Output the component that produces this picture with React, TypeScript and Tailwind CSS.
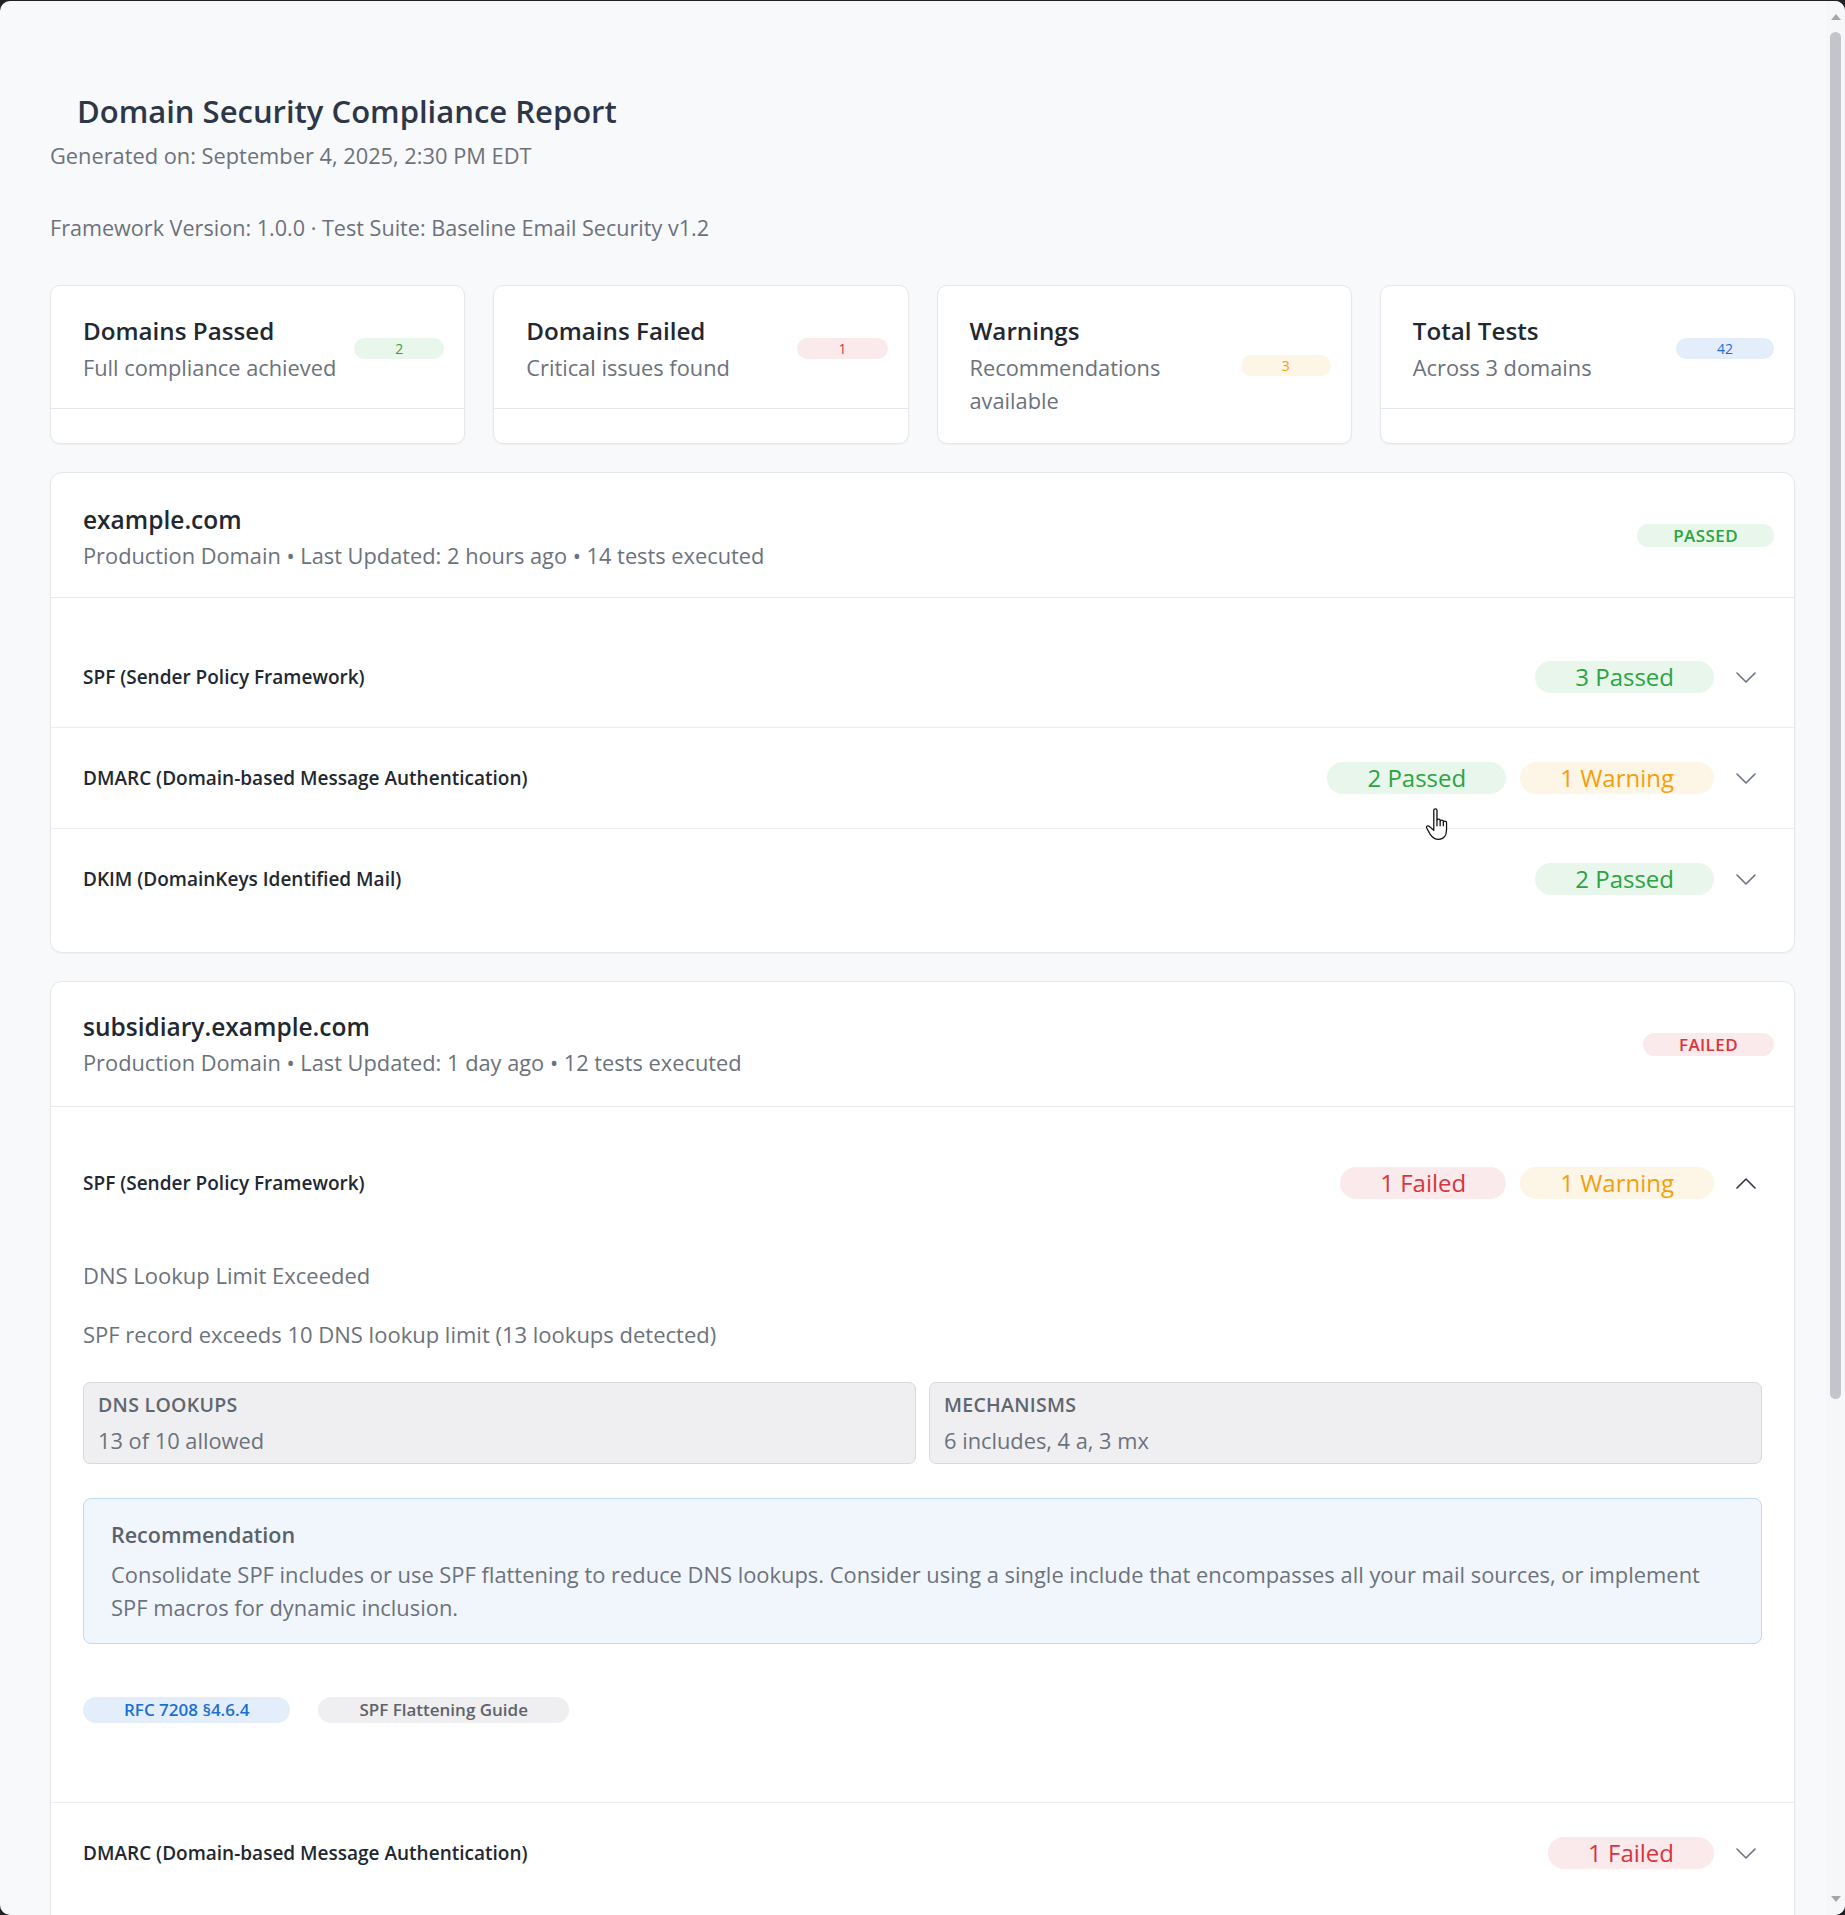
import React from 'react';

type Tone = 'green' | 'red' | 'amber' | 'blue' | 'gray';

const tones: Record<Tone, string> = {
  green: 'bg-[#e8f6eb] text-[#2ba441]',
  red: 'bg-[#fbeaeb] text-[#d8343f]',
  amber: 'bg-[#fdf5e6] text-[#f59e0b]',
  blue: 'bg-[#e3eefa] text-[#1c6fd2]',
  gray: 'bg-[#efeff1] text-[#5f6368]',
};

function Chevron({ up = false }: { up?: boolean }) {
  return (
    <svg width="20" height="11" viewBox="0 0 20 11" fill="none" stroke={up ? '#2d3748' : '#6b7280'} strokeWidth="1.6" strokeLinecap="round" strokeLinejoin="round">
      <path d={up ? 'M1 10 10 1l9 9' : 'M1 1l9 9 9-9'} />
    </svg>
  );
}

function StatCard({ title, sub, value, tone, footer = true }: { title: string; sub: string; value: string; tone: Tone; footer?: boolean }) {
  return (
    <div className="h-[159px] overflow-hidden rounded-[10px] border border-[#e5e7eb] bg-white shadow-[0_1px_2px_rgba(0,0,0,0.04)]">
      <div className="flex items-center gap-4 pl-[32px] pr-[20px] pt-[27px] pb-[24px]">
        <div className="flex-1">
          <div className="text-[24.2px] font-semibold leading-[36px] text-[#222831]">{title}</div>
          <div className="mt-[2px] text-[21.8px] leading-[33px] text-[#6c727c]">{sub}</div>
        </div>
        <span className={`rounded-full px-[41px] text-[14px] leading-[21px] ${tones[tone]}`}>{value}</span>
      </div>
      {footer && <div className="h-[34px] border-t border-[#e5e7eb]" />}
    </div>
  );
}

function Pill({ tone, children }: { tone: Tone; children: React.ReactNode }) {
  return <span className={`rounded-full px-[40px] text-[24px] font-medium leading-[32px] ${tones[tone]}`}>{children}</span>;
}

function CheckRow({ label, pills, open = false, children }: { label: string; pills: React.ReactNode; open?: boolean; children?: React.ReactNode }) {
  return (
    <div className="border-b border-[#eceef1] last:border-b-0">
      <div className="flex h-[100px] items-center pl-[32px] pr-[38px]">
        <div className="flex-1 text-[19px] font-semibold text-[#222831]">{label}</div>
        <div className="flex items-center gap-[14px]">{pills}</div>
        <div className="ml-[22px] flex">
          <Chevron up={open} />
        </div>
      </div>
      {open && children}
    </div>
  );
}

function DomainCard({ name, meta, status, tone, first = false, children }: { name: string; meta: string; status: string; tone: Tone; first?: boolean; children: React.ReactNode }) {
  return (
    <div className="overflow-hidden rounded-[12px] border border-[#e5e7eb] bg-white shadow-[0_1px_2px_rgba(0,0,0,0.04)]">
      <div className="flex h-[125px] items-center justify-between border-b border-[#e5e7eb] pl-[32px] pr-[20px]">
        <div className={first ? 'mt-[5px]' : 'mt-[1px]'}>
          <div className="text-[24.5px] font-semibold leading-[34px] text-[#222831]">{name}</div>
          <div className="mt-[2px] text-[21.8px] leading-[33px] text-[#6c727c]">{meta}</div>
        </div>
        <span className={`rounded-full px-[36px] text-[17px] font-semibold leading-[23px] tracking-[0.4px] ${tones[tone]}`}>{status}</span>
      </div>
      <div className={first ? 'pt-[29px] pb-[23px]' : 'pt-[26px] pb-[26px]'}>{children}</div>
    </div>
  );
}

function Metric({ label, value }: { label: string; value: string }) {
  return (
    <div className="rounded-[7px] border border-[#d8d9dd] bg-[#efeff1] pl-[14px] pr-[14px] pt-[8px] pb-[6px]">
      <div className="text-[19.5px] font-semibold leading-[27px] tracking-[0.3px] text-[#5f6670]">{label}</div>
      <div className="mt-[6px] text-[21.8px] leading-[33px] text-[#6c727c]">{value}</div>
    </div>
  );
}

function HandCursor() {
  return (
    <svg className="absolute left-[1424px] top-[806px]" width="27" height="34" viewBox="0 0 24 32" fill="#fff" stroke="#111" strokeWidth="1.2" strokeLinejoin="round">
      <path d="M8.5 3C8.5 1.4 11.5 1.4 11.5 3V12.5C11.5 11 14.5 11 14.5 12.5V13.5C14.5 12 17.5 12 17.5 13.5V14.5C17.5 13 20.5 13 20.5 14.5V21.5C20.5 26.5 18 30.5 13 30.5C9 30.5 7 28.5 5 25.5L1.8 19.8C1 18.2 2.8 17 4.2 18.2L8.5 22Z" />
      <path d="M11.5 12.5V18M14.5 13.5V18M17.5 14.5V18" fill="none" />
    </svg>
  );
}

export default function App() {
  return (
    <div className="h-[1915px] overflow-hidden bg-[#202124] pt-[1px] font-['Open_Sans',sans-serif]">
      <div className="relative flex h-full overflow-hidden rounded-[10px] bg-[#f8f9fa]">
        <main className="flex-1 pl-[50px] pr-[31px] pt-[88px]">
          <h1 className="pl-[27px] text-[31px] font-semibold leading-[44px] text-[#2d3748]">Domain Security Compliance Report</h1>
          <p className="mt-[6px] text-[21.8px] leading-[33px] text-[#6c727c]">Generated on: September 4, 2025, 2:30 PM EDT</p>
          <p className="mt-[39px] text-[21.6px] leading-[33px] text-[#6c727c]">Framework Version: 1.0.0 · Test Suite: Baseline Email Security v1.2</p>

          <div className="mt-[41px] grid grid-cols-4 gap-[28px]">
            <StatCard title="Domains Passed" sub="Full compliance achieved" value="2" tone="green" />
            <StatCard title="Domains Failed" sub="Critical issues found" value="1" tone="red" />
            <StatCard title="Warnings" sub="Recommendations available" value="3" tone="amber" footer={false} />
            <StatCard title="Total Tests" sub="Across 3 domains" value="42" tone="blue" />
          </div>

          <div className="mt-[28px]">
            <DomainCard first name="example.com" meta="Production Domain • Last Updated: 2 hours ago • 14 tests executed" status="PASSED" tone="green">
              <CheckRow label="SPF (Sender Policy Framework)" pills={<Pill tone="green">3 Passed</Pill>} />
              <CheckRow
                label="DMARC (Domain-based Message Authentication)"
                pills={
                  <>
                    <Pill tone="green">2 Passed</Pill>
                    <Pill tone="amber">1 Warning</Pill>
                  </>
                }
              />
              <CheckRow label="DKIM (DomainKeys Identified Mail)" pills={<Pill tone="green">2 Passed</Pill>} />
            </DomainCard>
          </div>

          <div className="mt-[28px]">
            <DomainCard name="subsidiary.example.com" meta="Production Domain • Last Updated: 1 day ago • 12 tests executed" status="FAILED" tone="red">
              <CheckRow
                label="SPF (Sender Policy Framework)"
                open
                pills={
                  <>
                    <Pill tone="red">1 Failed</Pill>
                    <Pill tone="amber">1 Warning</Pill>
                  </>
                }
              >
                <div className="px-[32px] pt-[26px] pb-[79px]">
                  <div className="text-[22px] leading-[33px] text-[#6c727c]">DNS Lookup Limit Exceeded</div>
                  <div className="mt-[26px] text-[22px] leading-[33px] text-[#6c727c]">SPF record exceeds 10 DNS lookup limit (13 lookups detected)</div>
                  <div className="mt-[31px] grid grid-cols-2 gap-[13px]">
                    <Metric label="DNS LOOKUPS" value="13 of 10 allowed" />
                    <Metric label="MECHANISMS" value="6 includes, 4 a, 3 mx" />
                  </div>
                  <div className="mt-[34px] rounded-[8px] border border-[#bfdaf3] bg-[#f1f6fc] px-[27px] pt-[21px] pb-[19px]">
                    <div className="text-[21.5px] font-semibold leading-[30px] text-[#5a616b]">Recommendation</div>
                    <div className="mt-[8px] text-[21.9px] leading-[33px] text-[#6c727c]">
                      Consolidate SPF includes or use SPF flattening to reduce DNS lookups. Consider using a single include that encompasses all your mail sources, or implement
                      <br />
                      SPF macros for dynamic inclusion.
                    </div>
                  </div>
                  <div className="mt-[53px] flex gap-[28px]">
                    <span className={`rounded-full px-[41px] text-[17px] font-semibold leading-[26px] ${tones.blue}`}>RFC 7208 §4.6.4</span>
                    <span className={`rounded-full px-[41px] text-[17px] font-semibold leading-[26px] ${tones.gray}`}>SPF Flattening Guide</span>
                  </div>
                </div>
              </CheckRow>
              <CheckRow label="DMARC (Domain-based Message Authentication)" pills={<Pill tone="red">1 Failed</Pill>} />
            </DomainCard>
          </div>
        </main>

        <div className="flex w-[19px] flex-col items-center bg-[#f6f7f9]">
          <div className="mt-[13px] h-0 w-0 border-x-[5px] border-b-[6px] border-x-transparent border-b-[#a3a6ab]" />
          <div className="mt-[12px] h-[1367px] w-[11px] rounded-full bg-[#c3c5ca]" />
          <div className="flex-1" />
          <div className="mb-[13px] h-0 w-0 border-x-[5px] border-t-[6px] border-x-transparent border-t-[#a3a6ab]" />
        </div>

        <HandCursor />
      </div>
    </div>
  );
}
